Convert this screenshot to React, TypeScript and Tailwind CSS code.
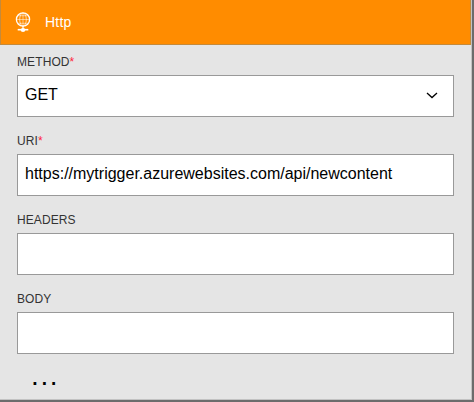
import type { ReactNode } from "react";

function GlobeIcon() {
  return (
    <svg width="17" height="21" viewBox="0 0 17 21" fill="none" stroke="#fff" aria-hidden="true">
      <circle cx="9" cy="7.5" r="6.6" strokeWidth="1.3" />
      <ellipse cx="9" cy="7.5" rx="3.3" ry="6.5" strokeWidth="0.6" />
      <path d="M9 1v13M2.7 7.5h12.6M4 3.7h10M4 11.3h10" strokeWidth="0.5" />
      <path d="M9 14v3" strokeWidth="1.2" />
      <path d="M3.7 17.7h10.6" strokeWidth="1.6" />
      <ellipse cx="9" cy="18" rx="2.3" ry="1.9" fill="#fff" stroke="none" />
    </svg>
  );
}

type FieldProps = { label: string; required?: boolean; children?: ReactNode };

function Field({ label, required, children }: FieldProps) {
  return (
    <div className="flex flex-col">
      <div className="mb-[5px] h-4 text-[12px] leading-4 tracking-[0.1px] text-[#333]">
        {label}
        {required && <span className="text-[#ff1f3d]">*</span>}
      </div>
      <div className="flex h-[42px] items-center justify-between border border-[#999] bg-white pr-[15px] pl-[7px] pb-[3px] text-[16px] text-black">
        {children}
      </div>
    </div>
  );
}

export default function App() {
  return (
    <div className="h-[402px] w-[474px] overflow-hidden bg-[#6c6c6c] font-['Liberation_Sans',Arial,sans-serif]">
      <div className="flex h-full flex-col border-r-2 border-b-2 border-r-[#6c6c6c] border-b-[#6c6c6c]">
        <div className="flex flex-1 flex-col border-r border-b border-[#c2c2c2] bg-[#e5e5e5]">
          <header className="flex h-[45px] items-center border-b border-l border-r border-[#c48a3c] bg-[#ff8c00] pl-[13px]">
            <GlobeIcon />
            <span className="ml-3.5 text-[14px] tracking-[0.2px] text-white">Http</span>
          </header>
          <main className="flex flex-col gap-4 pt-[9px] pr-[17px] pl-[17px]">
            <Field label="METHOD" required>
              <span>GET</span>
              <svg width="12" height="8" viewBox="0 0 12 8" fill="none" stroke="#000" strokeWidth="1.3" className="mt-0.5">
                <path d="M1 1l5 4.6l5-4.6" />
              </svg>
            </Field>
            <Field label="URI" required>
              <span>https://mytrigger.azurewebsites.com/api/newcontent</span>
            </Field>
            <Field label="HEADERS" />
            <Field label="BODY" />
          </main>
          <div className="mt-[10px] ml-[31px] h-6 text-[28px] leading-6 tracking-[1.6px] text-black">...</div>
        </div>
      </div>
    </div>
  );
}
